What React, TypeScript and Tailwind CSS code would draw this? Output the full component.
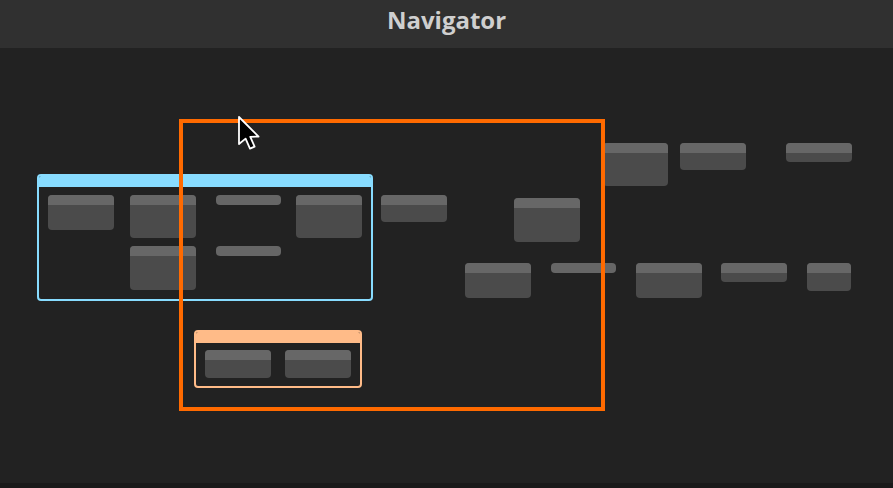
import React from "react";

// minimap items, page coordinates (canvas starts at y=48)
type Box = { x: number; y: number; w: number; h: number };

const nodes: Box[] = [
  { x: 48, y: 195, w: 66, h: 35 },
  { x: 130, y: 195, w: 66, h: 43 },
  { x: 130, y: 246, w: 66, h: 44 },
  { x: 296, y: 195, w: 66, h: 43 },
  { x: 381, y: 195, w: 66, h: 27 },
  { x: 514, y: 198, w: 66, h: 44 },
  { x: 465, y: 263, w: 66, h: 35 },
  { x: 603, y: 143, w: 65, h: 43 },
  { x: 680, y: 143, w: 66, h: 27 },
  { x: 786, y: 143, w: 66, h: 19 },
  { x: 636, y: 263, w: 66, h: 35 },
  { x: 721, y: 263, w: 66, h: 19 },
  { x: 807, y: 263, w: 44, h: 28 },
  { x: 205, y: 350, w: 66, h: 28 },
  { x: 285, y: 350, w: 66, h: 28 },
];

const bars: Box[] = [
  { x: 216, y: 195, w: 65, h: 10 },
  { x: 216, y: 246, w: 65, h: 10 },
  { x: 551, y: 263, w: 65, h: 10 },
];

const TOP = 48;

function place(b: Box) {
  return { left: b.x, top: b.y - TOP, width: b.w, height: b.h };
}

function Node({ box }: { box: Box }) {
  return (
    <div
      className="absolute flex flex-col overflow-hidden rounded-[4px] bg-[#4b4b4b]"
      style={place(box)}
    >
      <div className="h-[10px] shrink-0 bg-[#676767]" />
    </div>
  );
}

function Frame({ box, color }: { box: Box; color: "blue" | "peach" }) {
  const border = color === "blue" ? "border-[#88dcff]" : "border-[#ffbb88]";
  const head = color === "blue" ? "bg-[#88dcff]" : "bg-[#ffbb88]";
  return (
    <div
      className={`absolute flex flex-col overflow-hidden rounded-[4px] border-2 ${border}`}
      style={place(box)}
    >
      <div className={`h-[11px] shrink-0 ${head}`} />
    </div>
  );
}

function Cursor() {
  return (
    <svg
      className="absolute"
      style={{ left: 237, top: 115 - TOP }}
      width="26"
      height="40"
      viewBox="0 0 26 40"
    >
      <path
        d="M2 2 L2 29 L8.6 23.6 L13 33.6 L17.6 31.6 L13.3 21.8 L21.6 21.6 Z"
        fill="#000"
        stroke="#fff"
        strokeWidth="1.8"
        strokeLinejoin="round"
      />
    </svg>
  );
}

export default function App() {
  return (
    <div className="flex h-[488px] w-[893px] flex-col bg-[#222222] font-['Open_Sans','Noto_Sans',sans-serif]">
      <div className="flex h-[48px] shrink-0 items-center justify-center bg-[#303030] pb-[8px]">
        <h1 className="text-[24px] font-bold text-[#cfcfcf]">Navigator</h1>
      </div>
      <div className="relative flex-1 overflow-hidden bg-[#222222]">
        <Frame box={{ x: 37, y: 174, w: 336, h: 127 }} color="blue" />
        <Frame box={{ x: 194, y: 330, w: 168, h: 58 }} color="peach" />
        {nodes.map((n, i) => (
          <Node key={i} box={n} />
        ))}
        {bars.map((b, i) => (
          <div key={i} className="absolute rounded-[4px] bg-[#666666]" style={place(b)} />
        ))}
        {/* viewport rect */}
        <div
          className="absolute border-4 border-[#ff6a00]"
          style={place({ x: 179, y: 119, w: 426, h: 292 })}
        />
        <Cursor />
      </div>
      <div className="h-[5px] shrink-0 bg-[#1a1a1a]" />
    </div>
  );
}
